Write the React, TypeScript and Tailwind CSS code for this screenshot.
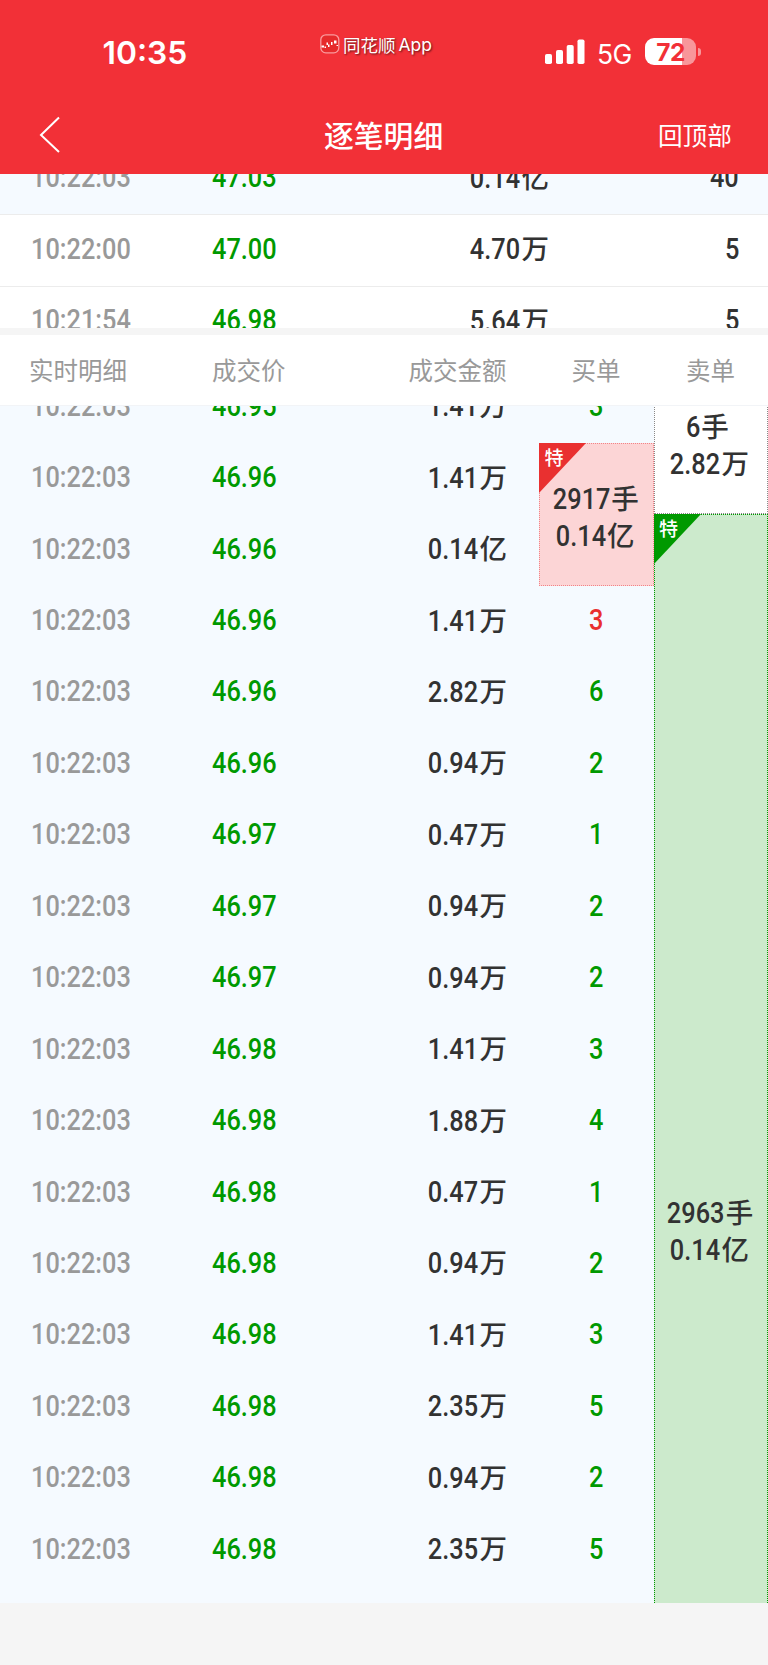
import type { ReactNode } from "react";
import clsx from "clsx";

type Trade = {
  time: string;
  price: string;
  amount: string;
  unit: string;
  buy?: string;
  up?: boolean;
};

const summary = [
  { time: "10:22:03", price: "47.03", amount: "0.14", unit: "亿", qty: "40" },
  { time: "10:22:00", price: "47.00", amount: "4.70", unit: "万", qty: "5" },
  { time: "10:21:54", price: "46.98", amount: "5.64", unit: "万", qty: "5" },
];

const trades: Trade[] = [
  { time: "10:22:03", price: "46.95", amount: "1.41", unit: "万", buy: "3" },
  { time: "10:22:03", price: "46.96", amount: "1.41", unit: "万" },
  { time: "10:22:03", price: "46.96", amount: "0.14", unit: "亿" },
  { time: "10:22:03", price: "46.96", amount: "1.41", unit: "万", buy: "3", up: true },
  { time: "10:22:03", price: "46.96", amount: "2.82", unit: "万", buy: "6" },
  { time: "10:22:03", price: "46.96", amount: "0.94", unit: "万", buy: "2" },
  { time: "10:22:03", price: "46.97", amount: "0.47", unit: "万", buy: "1" },
  { time: "10:22:03", price: "46.97", amount: "0.94", unit: "万", buy: "2" },
  { time: "10:22:03", price: "46.97", amount: "0.94", unit: "万", buy: "2" },
  { time: "10:22:03", price: "46.98", amount: "1.41", unit: "万", buy: "3" },
  { time: "10:22:03", price: "46.98", amount: "1.88", unit: "万", buy: "4" },
  { time: "10:22:03", price: "46.98", amount: "0.47", unit: "万", buy: "1" },
  { time: "10:22:03", price: "46.98", amount: "0.94", unit: "万", buy: "2" },
  { time: "10:22:03", price: "46.98", amount: "1.41", unit: "万", buy: "3" },
  { time: "10:22:03", price: "46.98", amount: "2.35", unit: "万", buy: "5" },
  { time: "10:22:03", price: "46.98", amount: "0.94", unit: "万", buy: "2" },
  { time: "10:22:03", price: "46.98", amount: "2.35", unit: "万", buy: "5" },
];

// Narrow figures, the way the quote font draws them
function Num({ children, className }: { children: ReactNode; className?: string }) {
  return (
    <span
      className={clsx(
        "inline-block scale-x-[0.88] font-['Roboto','Liberation_Sans',sans-serif] text-[28.8px] font-medium leading-[37px]",
        className
      )}
    >
      {children}
    </span>
  );
}

function Value({ num, unit }: { num: string; unit: string }) {
  return (
    <span className="inline-flex h-[37px] items-baseline whitespace-nowrap font-medium text-[#323232]">
      <Num className="origin-right">{num}</Num>
      <span className="ml-px text-[27.5px] leading-[37px]">{unit}</span>
    </span>
  );
}

function StatusBar() {
  return (
    <div className="flex h-[104px] items-start text-white">
      <div className="w-[320px] pl-[102.500px] pt-[33px] font-['Inter',sans-serif] text-[31.8px] font-semibold leading-[40px]">
        10:35
      </div>
      <div className="flex w-[224px] items-center pt-[33px]">
        <svg width="20" height="20" viewBox="0 0 20 20" className="mr-[3px] -mt-0.5">
          <rect x="0.8" y="0.8" width="18" height="18" rx="5" fill="#e62a2c" stroke="#fa9a9d" strokeWidth="1.3" />
          <path d="M1.500 11.500h2.500v2H1.500zM4.500 12.500h1.500v1.500H4.500zM6.500 8.500H8v2.500H6.500zM8 10.500h1.500v2.500H8zM11 8h1.500v3H11zM14 6.500h2.500v3H14zM16.500 11h1.500v1h-1.500z" fill="#fff" />
        </svg>
        <span className="text-[17.5px] leading-6 [text-shadow:1px_1px_2px_rgba(0,0,0,0.6)]">同花顺</span>
        <span className="ml-[3px] font-['Inter',sans-serif] text-[17.5px] leading-6 [text-shadow:1px_1px_2px_rgba(0,0,0,0.6)]">
          App
        </span>
      </div>
      <svg width="41" height="26" viewBox="0 0 41 26" className="mt-[39px]" fill="#fff">
        <rect x="1" y="15" width="7" height="10" rx="1.8" />
        <rect x="12" y="11" width="7" height="14" rx="1.8" />
        <rect x="22.700" y="6" width="7" height="19" rx="1.8" />
        <rect x="33.500" y="0.500" width="7" height="24.500" rx="1.8" />
      </svg>
      <span className="ml-3 mt-[34px] w-[48px] font-['Inter',sans-serif] text-[26.5px] leading-[40px] tracking-[-0.5px]">
        5G
      </span>
      <div className="mt-[38px] flex h-[27px] w-[51px] items-center justify-center rounded-[9px] bg-linear-to-r from-white from-73% to-[#f8969a] to-73% pt-0.5 font-['Inter',sans-serif] text-[24.5px] font-bold tracking-[-0.5px] text-[#f23037]">
        72
      </div>
      <div className="ml-0.5 mt-[48px] h-[8px] w-[3px] rounded-r-full bg-[#f8969a]" />
    </div>
  );
}

function NavBar() {
  return (
    <div className="flex h-[70px] items-start text-white">
      <svg width="30" height="40" viewBox="0 0 30 40" fill="none" stroke="#fff" strokeWidth="2" className="ml-9 mt-[11px]">
        <path d="M23 2.500L5 20l18 17" />
      </svg>
      <h1 className="ml-[258px] mt-[10px] w-[334px] text-[29.8px] font-medium leading-[40px]">逐笔明细</h1>
      <button className="mt-[10px] text-[24.6px] leading-[40px]">回顶部</button>
    </div>
  );
}

type BlockProps = {
  lots: string;
  amount: string;
  unit: string;
  tagColor?: string;
  className?: string;
};

function OrderBlock({ lots, amount, unit, tagColor, className }: BlockProps) {
  return (
    <div className={clsx("relative flex shrink-0 flex-col items-center justify-center border border-dotted pr-[9px] pt-[3px]", className)}>
      {tagColor && (
        <div className="absolute -left-px -top-px">
          <svg width="47" height="50" viewBox="0 0 47 50">
            <path d="M0 0h47L0 50z" fill={tagColor} />
          </svg>
          <span className="absolute left-[5.500px] top-0 text-[19px] font-medium leading-[28px] text-white">特</span>
        </div>
      )}
      <Value num={lots} unit="手" />
      <Value num={amount} unit={unit} />
    </div>
  );
}

export default function App() {
  return (
    <div className="flex h-[1665px] w-[768px] flex-col overflow-hidden bg-[#f5f5f5] font-['Noto_Sans_CJK_SC',sans-serif]">
      <header className="h-[174px] shrink-0 bg-[#f23037]">
        <StatusBar />
        <NavBar />
      </header>

      <section className="h-[154px] shrink-0 overflow-hidden bg-white">
        <div className="-mt-[30px]">
          {summary.map((row, i) => (
            <div
              key={row.time}
              className={clsx("flex h-[71.45px] items-center border-b border-[#ececec] pb-[3px]", i === 0 && "bg-[#f5faff]")}
            >
              <div className="w-[212px] pl-[30.500px]">
                <Num className="origin-left text-[#999]">{row.time}</Num>
              </div>
              <div className="w-[120px]">
                <Num className="origin-left text-[#090]">{row.price}</Num>
              </div>
              <div className="flex w-[217px] justify-end pb-[3px]">
                <Value num={row.amount} unit={row.unit} />
              </div>
              <div className="w-[190px] text-right">
                <Num className="origin-right text-[#323232]">{row.qty}</Num>
              </div>
            </div>
          ))}
        </div>
      </section>

      <div className="mt-[7px] flex h-[70px] shrink-0 items-center bg-white text-[24.5px] text-[#999]">
        <span className="w-[212px] pl-[29px]">实时明细</span>
        <span className="w-[120px]">成交价</span>
        <span className="w-[174.500px] text-right">成交金额</span>
        <span className="w-[114px] text-right">买单</span>
        <span className="w-[114.500px] text-right">卖单</span>
      </div>

      <section className="h-[198px] shrink-0 grow overflow-hidden border-t border-[#f2f4f7] bg-[#f5faff]">
        <div className="-mt-[34.5px] flex">
          <div className="w-[539px]">
            {trades.map((row, i) => (
              <div key={i} className="flex h-[71.45px] items-center pb-[2px]">
                <div className="w-[212px] pl-[30.500px]">
                  <Num className="origin-left text-[#999]">{row.time}</Num>
                </div>
                <div className="w-[120px]">
                  <Num className="origin-left text-[#090]">{row.price}</Num>
                </div>
                <div className="flex w-[175px] justify-end pb-[3px]">
                  <Value num={row.amount} unit={row.unit} />
                </div>
              </div>
            ))}
          </div>

          <div className="flex w-[114.500px] flex-col">
            {trades.map((row, i) => {
              if (i === 1) {
                return (
                  <OrderBlock
                    key={i}
                    lots="2917"
                    amount="0.14"
                    unit="亿"
                    tagColor="#e93030"
                    className="h-[142.9px] border-[#f28488] bg-[#fcd5d6]"
                  />
                );
              }
              if (!row.buy) return null;
              return (
                <div key={i} className="flex h-[71.45px] shrink-0 items-center justify-center pb-[2px]">
                  <Num className={row.up ? "text-[#e93030]" : "text-[#090]"}>{row.buy}</Num>
                </div>
              );
            })}
          </div>

          <div className="flex w-[114.500px] flex-col">
            <OrderBlock lots="6" amount="2.82" unit="万" className="h-[142.9px] border-[#888] bg-white" />
            <OrderBlock
              lots="2963"
              amount="0.14"
              unit="亿"
              tagColor="#009900"
              className="h-[1429px] border-[#090] bg-[#cceacc]"
            />
          </div>
        </div>
      </section>

      <footer className="h-[62px] shrink-0 bg-[#f5f5f5]" />
    </div>
  );
}
